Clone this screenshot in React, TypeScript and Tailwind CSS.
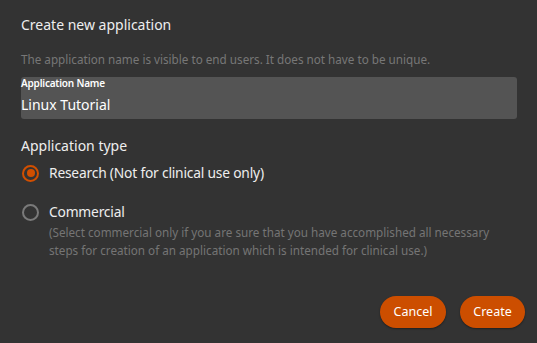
export default function App() {
  return (
    <div
      className="w-[537px] h-[343px] bg-[#333333] flex flex-col px-[21px] text-[#eeeeee]"
      style={{ fontFamily: "'Noto Sans', sans-serif" }}
    >
      <h1 className="mt-[16px] text-[14px] leading-[18px]">Create new application</h1>
      <p className="mt-[17px] text-[11.7px] leading-[16px] text-[#777777] whitespace-nowrap">
        The application name is visible to end users. It does not have to be unique.
      </p>

      {/* Campo de nombre */}
      <div className="mt-[10px] h-[42px] w-[496px] bg-[#545454] rounded-[3px] flex flex-col">
        <span className="text-[10px] leading-[13px] font-semibold text-white tracking-[-0.2px]">
          Application Name
        </span>
        <span className="text-[14px] leading-[18px] text-white mt-[6px]">Linux Tutorial</span>
      </div>

      <h2 className="mt-[18px] text-[14px] leading-[18px]">Application type</h2>

      {/* Opciones */}
      <div className="mt-[9px] flex items-center gap-[10px] pl-[1px]">
        <span className="w-[17px] h-[17px] rounded-full border-2 border-[#d24f00] flex items-center justify-center">
          <span className="w-[8px] h-[8px] rounded-full bg-[#d24f00]" />
        </span>
        <span className="text-[13.8px] leading-[18px] tracking-[-0.2px]">
          Research (Not for clinical use only)
        </span>
      </div>

      <div className="mt-[21px] flex items-start gap-[10px] pl-[1px]">
        <span className="mt-[1px] w-[17px] h-[17px] rounded-full border-2 border-[#7a7a7a] shrink-0" />
        <div className="flex flex-col">
          <span className="text-[13.8px] leading-[18px] tracking-[-0.2px]">Commercial</span>
          <span className="mt-[2px] text-[11.7px] leading-[18px] text-[#757575] w-[450px]">
            (Select commercial only if you are sure that you have accomplished all necessary
            steps for creation of an application which is intended for clinical use.)
          </span>
        </div>
      </div>

      <div className="mt-auto mb-[15px] mr-[-9px] flex justify-end gap-[14px]">
        <button className="h-[32px] w-[66px] rounded-full bg-[#cc4e00] text-white text-[12.5px] shadow-[0_1px_2px_rgba(0,0,0,0.4)]">
          Cancel
        </button>
        <button className="h-[32px] w-[65px] rounded-full bg-[#cc4e00] text-white text-[12.5px] shadow-[0_1px_2px_rgba(0,0,0,0.4)]">
          Create
        </button>
      </div>
    </div>
  );
}
